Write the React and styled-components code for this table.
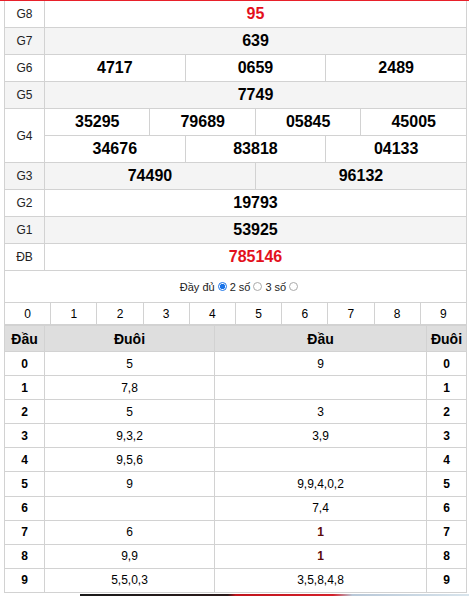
import React from "react";
import styled, { createGlobalStyle } from "styled-components";

const GlobalStyle = createGlobalStyle`
  body {
    margin: 0;
    background: #fff;
    font-family: "Liberation Sans", Arial, sans-serif;
    color: #000;
  }
`;

const prizes = [
  { label: "G8", rows: [["95"]], red: true },
  { label: "G7", rows: [["639"]] },
  { label: "G6", rows: [["4717", "0659", "2489"]] },
  { label: "G5", rows: [["7749"]] },
  {
    label: "G4",
    rows: [
      ["35295", "79689", "05845", "45005"],
      ["34676", "83818", "04133"],
    ],
  },
  { label: "G3", rows: [["74490", "96132"]] },
  { label: "G2", rows: [["19793"]] },
  { label: "G1", rows: [["53925"]] },
  { label: "ĐB", rows: [["785146"]], red: true },
];

const loto = [
  { d: "0", tail: "5", head: "9" },
  { d: "1", tail: "7,8", head: "" },
  { d: "2", tail: "5", head: "3" },
  { d: "3", tail: "9,3,2", head: "3,9" },
  { d: "4", tail: "9,5,6", head: "" },
  { d: "5", tail: "9", head: "9,9,4,0,2" },
  { d: "6", tail: "", head: "7,4" },
  { d: "7", tail: "6", head: "1", special: true },
  { d: "8", tail: "9,9", head: "1", special: true },
  { d: "9", tail: "5,5,0,3", head: "3,5,8,4,8" },
];

export default function App() {
  return (
    <Page>
      <GlobalStyle />
      <Box>
        <ResultTable>
          <colgroup>
            <col style={{ width: 40 }} />
            {Array.from({ length: 12 }).map((_, i) => (
              <col key={i} />
            ))}
          </colgroup>
          <tbody>
            {prizes.map((p, pi) =>
              p.rows.map((row, ri) => (
                <ResultRow key={p.label + ri} $alt={pi % 2 === 1}>
                  {ri === 0 && <Label rowSpan={p.rows.length}>{p.label}</Label>}
                  {row.map((n) => (
                    <Num key={n} colSpan={12 / row.length} $red={p.red}>
                      {n}
                    </Num>
                  ))}
                </ResultRow>
              ))
            )}
          </tbody>
        </ResultTable>

        <Options>
          Đầy đủ
          <Radio $checked />
          2 số
          <Radio />
          3 số
          <Radio />
        </Options>

        <DigitTable>
          <tbody>
            <tr>
              {Array.from({ length: 10 }).map((_, i) => (
                <DigitCell key={i}>{i}</DigitCell>
              ))}
            </tr>
          </tbody>
        </DigitTable>

        <LotoTable>
          <colgroup>
            <col style={{ width: 40 }} />
            <col style={{ width: 170 }} />
            <col style={{ width: 212 }} />
            <col style={{ width: 40 }} />
          </colgroup>
          <thead>
            <tr>
              <HeadCell>Đầu</HeadCell>
              <HeadCell>Đuôi</HeadCell>
              <HeadCell>Đầu</HeadCell>
              <HeadCell>Đuôi</HeadCell>
            </tr>
          </thead>
          <tbody>
            {loto.map((r) => (
              <tr key={r.d}>
                <KeyCell>{r.d}</KeyCell>
                <ValCell>{r.tail}</ValCell>
                <ValCell $special={r.special}>{r.head}</ValCell>
                <KeyCell>{r.d}</KeyCell>
              </tr>
            ))}
          </tbody>
        </LotoTable>
      </Box>
      <Banner />
    </Page>
  );
}

const Page = styled.div`
  border-top: 1px solid #e8202a;
  width: 469px;
  height: 595px;
  overflow: hidden;
`;

const Box = styled.div`
  margin-left: 4px;
  width: 463px;
`;

const ResultTable = styled.table`
  width: 100%;
  border-collapse: collapse;
  table-layout: fixed;
  td {
    border: 1px solid #d2d2d2;
    padding: 0;
    height: 26px;
    text-align: center;
  }
  tr:first-child td {
    border-top: none;
  }
`;

const ResultRow = styled.tr`
  background: ${(p) => (p.$alt ? "#f4f4f4" : "#fff")};
`;

const Label = styled.td`
  font-size: 12px;
  color: #222;
`;

const Num = styled.td`
  font-size: 16px;
  font-weight: bold;
  color: ${(p) => (p.$red ? "#e3101c" : "#000")};
`;

const Options = styled.div`
  display: flex;
  align-items: center;
  justify-content: center;
  gap: 2px;
  height: 31px;
  padding-left: 8px;
  font-size: 11px;
  color: #222;
  border-left: 1px solid #d2d2d2;
  border-right: 1px solid #d2d2d2;
  box-sizing: border-box;
`;

const Radio = styled.span`
  display: inline-block;
  width: 7px;
  height: 7px;
  border-radius: 50%;
  border: 1px solid ${(p) => (p.$checked ? "#1a73e8" : "#aaa")};
  background: ${(p) =>
    p.$checked ? "radial-gradient(circle, #1a73e8 50%, #fff 60%)" : "#fff"};
  margin: 0 1px;
`;

const DigitTable = styled.table`
  width: 100%;
  border-collapse: collapse;
  table-layout: fixed;
`;

const DigitCell = styled.td`
  border: 1px solid #d2d2d2;
  height: 21px;
  padding: 0;
  text-align: center;
  font-size: 12px;
`;

const LotoTable = styled.table`
  width: 100%;
  border-collapse: collapse;
  table-layout: fixed;
  td,
  th {
    border: 1px solid #d2d2d2;
    padding: 0;
    text-align: center;
  }
`;

const HeadCell = styled.th`
  background: #dedede;
  height: 25px;
  font-size: 14px;
  font-weight: bold;
`;

const KeyCell = styled.td`
  height: 23.1px;
  font-size: 12px;
  font-weight: bold;
`;

const ValCell = styled.td`
  font-size: 12px;
  font-weight: ${(p) => (p.$special ? "bold" : "normal")};
  color: ${(p) => (p.$special ? "#5c0a0a" : "#000")};
`;

const Banner = styled.div`
  margin: 1px 0 0 80px;
  height: 6px;
  background: linear-gradient(
    90deg,
    #1a1a1a 0%,
    #2a1a1a 38%,
    #c0141c 40%,
    #d4202a 65%,
    #b8c8d8 70%,
    #d8e4ec 100%
  );
`;
